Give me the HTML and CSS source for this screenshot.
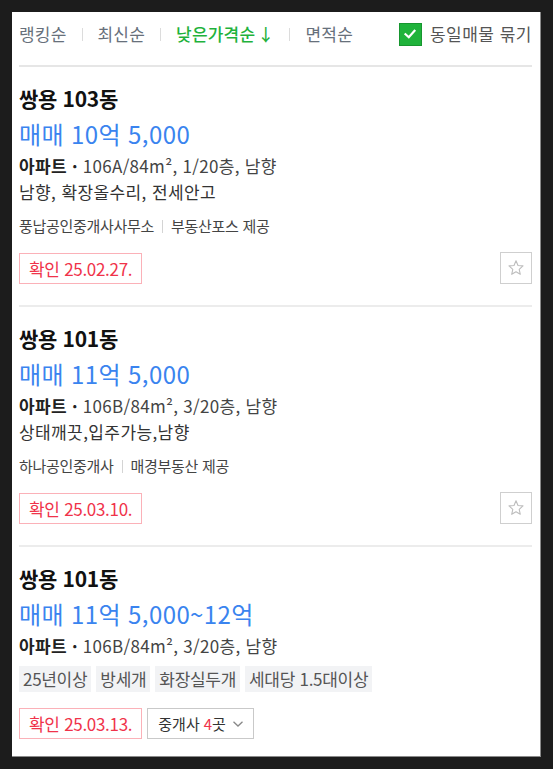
FILE: index.html
```html
<!DOCTYPE html>
<html lang="ko">
<head>
<meta charset="utf-8">
<title>매물 목록</title>
<link rel="stylesheet" href="styles.css">
</head>
<body>
<div class="panel">
  <div class="sortbar">
    <ul class="sorts">
      <li class="sort">랭킹순</li>
      <li class="sep"></li>
      <li class="sort">최신순</li>
      <li class="sep"></li>
      <li class="sort active">낮은가격순<span class="arrow">↓</span></li>
      <li class="sep"></li>
      <li class="sort">면적순</li>
    </ul>
    <label class="group">
      <span class="check"><svg width="14" height="14" viewBox="0 0 14 14"><path d="M2.5 7.2 L5.8 10.2 L11.5 3.8" fill="none" stroke="#fff" stroke-width="2.2" stroke-linecap="square"/></svg></span>
      <span class="group-label">동일매물 묶기</span>
    </label>
  </div>

  <div class="item">
    <div class="title">쌍용 103동</div>
    <div class="price">매매 10억 5,000</div>
    <div class="info"><strong>아파트 · </strong>106A/84m², 1/20층, 남향</div>
    <div class="desc">남향, 확장올수리, 전세안고</div>
    <div class="agent"><span>풍납공인중개사사무소</span><span class="asep"></span><span>부동산포스 제공</span></div>
    <div class="bottom">
      <span class="confirm">확인 25.02.27.</span>
      <span class="fav"><svg width="20" height="20" viewBox="0 0 20 20"><path d="M10 2.8 L12 7.5 L17 7.9 L13.2 11.3 L14.3 16.3 L10 13.7 L5.7 16.3 L6.8 11.3 L3 7.9 L8 7.5 Z" fill="none" stroke="#bdbdbd" stroke-width="1.1" stroke-linejoin="round"/></svg></span>
    </div>
  </div>

  <div class="item">
    <div class="title">쌍용 101동</div>
    <div class="price">매매 11억 5,000</div>
    <div class="info"><strong>아파트 · </strong>106B/84m², 3/20층, 남향</div>
    <div class="desc">상태깨끗,입주가능,남향</div>
    <div class="agent"><span>하나공인중개사</span><span class="asep"></span><span>매경부동산 제공</span></div>
    <div class="bottom">
      <span class="confirm">확인 25.03.10.</span>
      <span class="fav"><svg width="20" height="20" viewBox="0 0 20 20"><path d="M10 2.8 L12 7.5 L17 7.9 L13.2 11.3 L14.3 16.3 L10 13.7 L5.7 16.3 L6.8 11.3 L3 7.9 L8 7.5 Z" fill="none" stroke="#bdbdbd" stroke-width="1.1" stroke-linejoin="round"/></svg></span>
    </div>
  </div>

  <div class="item last">
    <div class="title">쌍용 101동</div>
    <div class="price">매매 11억 5,000~12억</div>
    <div class="info"><strong>아파트 · </strong>106B/84m², 3/20층, 남향</div>
    <ul class="tags">
      <li class="tag">25년이상</li>
      <li class="tag">방세개</li>
      <li class="tag">화장실두개</li>
      <li class="tag">세대당 1.5대이상</li>
    </ul>
    <div class="bottom">
      <span class="confirm">확인 25.03.13.</span>
      <span class="agents">중개사 <em>4</em>곳<svg width="12" height="8" viewBox="0 0 12 8"><path d="M1.5 1.8 L6 6 L10.5 1.8" fill="none" stroke="#888" stroke-width="1.3"/></svg></span>
    </div>
  </div>
</div>
</body>
</html>
```

FILE: styles.css
```css
* { box-sizing: border-box; }
html, body { margin: 0; padding: 0; }
body {
  background: #1c1c1c;
  width: 553px;
  height: 769px;
  padding: 12px 0 0 12px;
  font-family: "Noto Sans CJK KR", "Noto Sans", sans-serif;
  color: #333;
}
ul { list-style: none; margin: 0; padding: 0; }

.panel {
  width: 529px;
  height: 745px;
  background: #fff;
  border-right: 1px solid #8a8a8a;
  border-bottom: 1px solid #8a8a8a;
  padding: 0 8px 0 7px;
  overflow: hidden;
}

.sortbar {
  height: 55px;
  padding-bottom: 9px;
  border-bottom: 2px solid #e6e6e6;
  display: flex;
  align-items: center;
  justify-content: space-between;
}
.sorts { display: flex; align-items: center; gap: 15px; }
.sort { font-size: 17px; line-height: 22px; color: #67707b; letter-spacing: 0.2px; }
.sort.active { color: #1fb23c; font-weight: 500; }
.arrow { margin-left: 2px; }
.sep { width: 1px; height: 13px; background: #dcdcdc; }

.group { display: flex; align-items: center; gap: 8px; }
.check {
  width: 23px; height: 23px;
  background: #1fb33b;
  border: 1px solid #17962f;
  display: flex; align-items: center; justify-content: center;
}
.group-label { font-size: 17px; line-height: 22px; color: #555; letter-spacing: 0.5px; }

.item {
  padding: 19px 0 21px;
  border-bottom: 2px solid #ececec;
}
.title { font-size: 21px; line-height: 24px; font-weight: 700; color: #111; letter-spacing: -0.3px; }
.price { margin-top: 8px; font-size: 24px; line-height: 31px; color: #3a84ef; letter-spacing: 0.4px; }
.info { margin-top: 4px; font-size: 17px; line-height: 26px; color: #444; letter-spacing: 0.3px; }
.info strong { font-weight: 700; color: #222; }
.desc { font-size: 17px; line-height: 26px; color: #333; letter-spacing: 0.4px; }
.agent {
  margin-top: 11px;
  font-size: 15px; line-height: 20px; color: #444;
  letter-spacing: -0.3px;
  display: flex; align-items: center;
}
.asep { width: 1px; height: 13px; background: #d4d4d4; margin: 0 8px; }

.bottom { margin-top: 16px; display: flex; align-items: center; gap: 5px; }
.confirm {
  height: 31px;
  padding: 0 9px;
  border: 1px solid #fbb1b8;
  color: #f0334a;
  font-size: 17px;
  line-height: 29px;
  letter-spacing: -0.3px;
}
.fav {
  margin-left: auto;
  width: 32px; height: 32px;
  border: 1px solid #cfcfcf;
  display: flex; align-items: center; justify-content: center;
}

.tags { margin-top: 7px; display: flex; gap: 5px; }
.tag {
  height: 26px;
  padding: 0 4px;
  background: #f2f3f5;
  color: #555;
  font-size: 17px;
  line-height: 26px;
  letter-spacing: -0.3px;
}

.agents {
  height: 31px;
  padding: 0 9px 0 10px;
  border: 1px solid #c9c9c9;
  font-size: 15px;
  line-height: 29px;
  color: #333;
  display: flex; align-items: center;
}
.agents em { font-style: normal; color: #f0334a; margin-left: 4px; }
.agents svg { margin-left: 6px; }
.item.last { border-bottom: none; }
```
